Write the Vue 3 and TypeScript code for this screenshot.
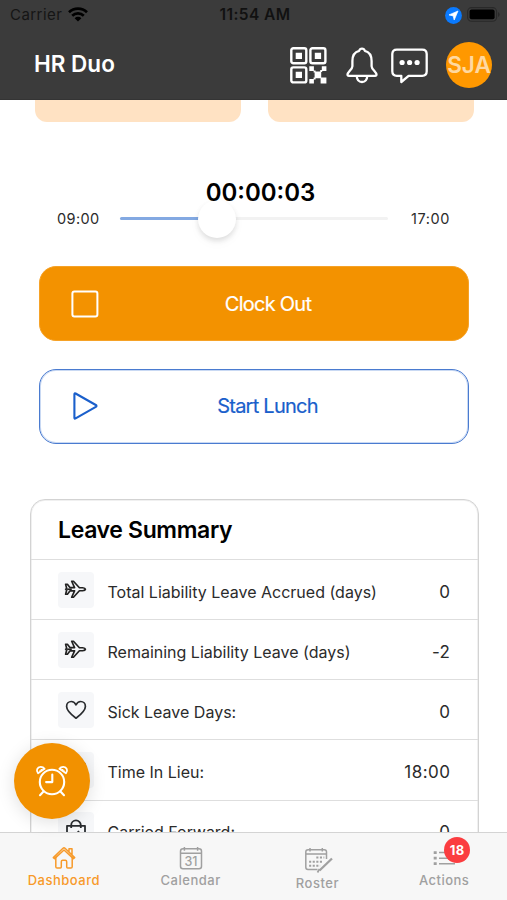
<script setup lang="ts">
type RowIcon = 'plane' | 'heart' | 'bag'
interface LeaveRow { icon: RowIcon; label: string; value: string }
interface Tab { id: string; label: string; active?: boolean; badge?: number }

const rows: LeaveRow[] = [
  { icon: 'plane', label: 'Total Liability Leave Accrued (days)', value: '0' },
  { icon: 'plane', label: 'Remaining Liability Leave (days)', value: '-2' },
  { icon: 'heart', label: 'Sick Leave Days:', value: '0' },
  { icon: 'heart', label: 'Time In Lieu:', value: '18:00' },
  { icon: 'bag', label: 'Carried Forward:', value: '0' },
]
const tabs: Tab[] = [
  { id: 'dashboard', label: 'Dashboard', active: true },
  { id: 'calendar', label: 'Calendar' },
  { id: 'roster', label: 'Roster' },
  { id: 'actions', label: 'Actions', badge: 18 },
]
const progress = 36.3
</script>

<template>
  <div class="screen">
    <header class="header">
      <div class="status">
        <div class="status-left">
          <span class="carrier">Carrier</span>
          <svg class="wifi" width="20" height="15" viewBox="0 0 20 15" fill="none" stroke="#000" stroke-width="2.7">
            <path d="M1 5.2a13 13 0 0 1 18 0M4.2 8.7a8.4 8.4 0 0 1 11.6 0" />
            <path d="M10 14.6 6.6 11.2a4.9 4.9 0 0 1 6.8 0Z" fill="#000" stroke="none" />
          </svg>
        </div>
        <span class="clock">11:54 AM</span>
        <div class="status-right">
          <svg width="17" height="17" viewBox="0 0 17 17"><circle cx="8.5" cy="8.5" r="8.4" fill="#0a7aff" /><path d="M13 4 9.2 13 8.2 8.9 4 7.9Z" fill="#fff" stroke="#fff" stroke-width=".7" stroke-linejoin="round" /></svg>
          <svg class="battery" width="33" height="15" viewBox="0 0 33 15"><rect x=".6" y=".6" width="29" height="13.6" rx="4" fill="none" stroke="#292929" stroke-width="1.1" /><rect x="2.6" y="2.6" width="25" height="9.6" rx="2" /><path d="M31 5v5q1.6-.8 1.6-2.5T31 5Z" fill="#292929" /></svg>
        </div>
      </div>
      <div class="nav">
        <h1 class="brand">HR Duo</h1>
        <svg class="qr" width="37" height="37" viewBox="0 0 37 37">
          <g fill="none" stroke="#fff" stroke-width="2.4">
            <rect x="1.3" y="1.3" width="15" height="15" rx="2" />
            <rect x="20.4" y="1.3" width="15" height="15" rx="2" />
            <rect x="1.3" y="20.4" width="15" height="15" rx="2" />
          </g>
          <path fill="#fff" d="M5.7 5.7h6.3v6.3H5.7zM24.8 5.7h6.3v6.3h-6.3zM5.7 24.8h6.3v6.3H5.7zM19.3 19.3h4.6v4.6h-4.6zM31.8 19.3h4.6v4.6h-4.6zM24.6 24.6h6.6v6.6h-6.6zM19.3 32h4.6v4.6h-4.6zM30.6 30.6h5.8v5.8h-5.8zM23.6 23.6h2v2h-2zM30.2 23h2v2h-2zM23.6 30.6h2v2h-2z" />
        </svg>
        <svg class="bell" width="32" height="37" viewBox="0 0 32 37" fill="none" stroke="#fff" stroke-width="2.3" stroke-linejoin="round">
          <path d="M13.2 3.8Q13.8 1.7 16 1.7t2.8 2.1C23.6 5 25.6 9 25.6 14v5.2c0 3.2 4.9 6.1 4.9 8.3 0 .9-.5 1.3-1.4 1.3H2.9c-.9 0-1.4-.4-1.4-1.3 0-2.2 4.9-5.1 4.9-8.3V14c0-5 2-9 6.8-10.2Z" />
          <path d="M10.7 29c.3 3.9 2.4 6 5.3 6s5-2.1 5.3-6" />
        </svg>
        <svg class="chat" width="37" height="36" viewBox="0 0 37 36" fill="none" stroke="#fff" stroke-width="2.3" stroke-linejoin="round">
          <path d="M5.8 1.6h25.4q4.5 0 4.5 4.5v17.2q0 4.5-4.5 4.5H17.6L10.3 34v-6.2H5.8q-4.5 0-4.5-4.5V6.1q0-4.5 4.5-4.5Z" />
          <g fill="#fff" stroke="none"><circle cx="11.1" cy="14.5" r="2.6" /><circle cx="18.6" cy="14.5" r="2.6" /><circle cx="26.1" cy="14.5" r="2.6" /></g>
        </svg>
        <div class="avatar"><span>SJA</span></div>
      </div>
    </header>

    <main class="content">
      <div class="pads"><div class="pad" /><div class="pad" /></div>
      <div class="timer"><span>00:00:03</span></div>
      <div class="slider-row">
        <span class="start">09:00</span>
        <div class="track">
          <div class="fill" :style="{ width: progress + '%' }"><i class="thumb" /></div>
        </div>
        <span class="end">17:00</span>
      </div>
      <button class="btn primary">
        <svg width="28" height="28" viewBox="0 0 28 28" fill="none" stroke="#fff" stroke-width="2"><rect x="1.4" y="1.4" width="25" height="25" rx="2" /></svg>
        <span>Clock Out</span>
      </button>
      <button class="btn outline">
        <svg width="28" height="28" viewBox="0 0 28 28" fill="none" stroke="#1a5fcb" stroke-width="2.1" stroke-linejoin="round"><path d="M4.4 2.2q0-1.3 1.2-.7L25.8 13q1.4.9 0 1.8L5.6 26.4q-1.2.7-1.2-.7Z" /></svg>
        <span>Start Lunch</span>
      </button>

      <section class="card">
        <h2>Leave Summary</h2>
        <div v-for="row in rows" :key="row.label" class="row">
          <div class="tile">
            <svg v-if="row.icon === 'plane'" width="23" height="20.5" viewBox="0 0 24 22" fill="none" stroke="#222" stroke-width="1.8" stroke-linejoin="round">
              <path d="M1.4 5.6h1.9L6 9.2l5 .1L7.9 2.4h1.9l6.4 7h3.4q2.8.4 3 1.6-.2 1.2-3 1.6h-3.4l-6.4 7H7.9l3.1-6.9-5 .1-2.700 3.600H1.400L2.500 12 1.400 11l1.100-1Z" /><path d="M3 11h5" />
            </svg>
            <svg v-else-if="row.icon === 'heart'" width="22" height="20" viewBox="0 0 22 20" fill="none" stroke="#2a2d30" stroke-width="1.7" stroke-linejoin="round">
              <path d="M11 18.2C6.8 15 1.6 11 1.6 6.4 1.6 3.5 3.7 1.5 6.3 1.5c2.1 0 3.7 1.2 4.7 3.3 1-2.1 2.6-3.3 4.7-3.3 2.6 0 4.7 2 4.7 4.9 0 4.6-5.2 8.6-9.4 11.8Z" />
            </svg>
            <svg v-else width="22" height="22" viewBox="0 0 22 22" fill="none" stroke="#2a2d30" stroke-width="1.8" stroke-linejoin="round">
              <path d="M2 6.8h18V21H2ZM6.2 9V6.2a4.8 4.8 0 0 1 9.6 0V9M8 14.5l2 2 4-4.5" />
            </svg>
          </div>
          <span class="label">{{ row.label }}</span>
          <span class="value">{{ row.value }}</span>
        </div>
      </section>
    </main>

    <nav class="tabs">
      <a v-for="tab in tabs" :key="tab.id" class="tab" :class="[tab.id, { active: tab.active }]">
        <span class="tab-icon">
          <svg v-if="tab.id === 'dashboard'" width="24" height="24" viewBox="0 0 24 24" fill="none" stroke="currentColor" stroke-width="1.5" stroke-linejoin="round" stroke-linecap="round">
            <path d="M3.8 11.5v9.2q0 1.3 1.3 1.3h3.2q1 0 1-1v-5.2q0-1.5 1.4-1.5h2.6q1.4 0 1.4 1.5V21q0 1 1 1h3.2q1.3 0 1.3-1.3v-9.2" />
            <path d="M1.3 11.6 11 2.3q1-.9 2 0l9.7 9.3-1.3 1L12 4 2.6 12.6ZM17 5.6V2.8h3v5.8" />
          </svg>
          <svg v-else-if="tab.id === 'calendar'" width="24" height="24" viewBox="0 0 24 24" fill="none" stroke="currentColor" stroke-width="1.5">
            <rect x="1.5" y="2.8" width="21" height="20" rx="2.5" /><path d="M1.5 7.3h21M5.4 1v3.8M18.6 1v3.8" />
            <text x="12" y="19.5" text-anchor="middle" class="day">31</text>
          </svg>
          <svg v-else-if="tab.id === 'roster'" width="29" height="27" viewBox="0 0 29 27" fill="none" stroke="currentColor" stroke-width="1.5">
            <path d="M22.5 12V5q0-2.2-2.2-2.2H4Q1.8 2.8 1.8 5v15.2q0 2.2 2.2 2.2h9.5M1.8 7h20.7M6 1v3.5M18.3 1v3.5" />
            <path stroke-width="2" stroke-dasharray="2.1 1.5" d="M12.3 10.5h8M5.1 14.7h14M5.1 18.7h11" />
            <path stroke-width="2.3" d="M28 11.5 15.5 23.5" /><path stroke-width="1.7" d="m15.5 22-2 3.5" />
          </svg>
          <svg v-else width="24" height="20" viewBox="0 0 24 20" fill="none" stroke="currentColor" stroke-width="1.5">
            <path d="M7 4.6h16M7 10.2h16M7 15.7h16" /><path stroke-width="2.8" d="M1.7 4.6h3M1.7 10.2h3M1.7 15.7h3" />
          </svg>
          <b v-if="tab.badge" class="badge">{{ tab.badge }}</b>
        </span>
        <span class="tab-label">{{ tab.label }}</span>
      </a>
    </nav>

    <button class="fab" aria-label="Clock">
      <svg width="34" height="32" viewBox="0 0 34 32" fill="none" stroke="#fff" stroke-width="2.1" stroke-linecap="round" stroke-linejoin="round">
        <circle cx="17" cy="17" r="12.2" /><path d="M17.3 9.5v7.6h-6.2M8.5 26.5 5 30.2M25.5 26.5l3.5 3.7" />
        <path stroke-width="1.8" d="M3 8.2C.7 5.500 2.300 2 5.600 1.800c2-.1 3.200.8 4 1.900ZM31 8.200c2.300-2.700.7-6.200-2.600-6.400-2-.1-3.200.8-4 1.900Z" />
        <path stroke-width="1" d="m4.700 5.700 2.300-1.500M29.300 5.700 27 4.200" />
      </svg>
    </button>
  </div>
</template>

<style>
body { background: #fff; }
</style>

<style scoped>
* { box-sizing: border-box; }
.screen { position: relative; width: 507px; height: 900px; display: flex; flex-direction: column; overflow: hidden; background: #fff; font-family: Inter, "Liberation Sans", sans-serif; color: #2b2b2b; }
.header { height: 100px; flex: none; background: #3b3b3b; border-bottom: 1px solid #343434; position: relative; z-index: 1; }
.status { height: 30px; display: grid; grid-template-columns: 1fr auto 1fr; align-items: center; padding: 0 7px 0 10px; color: #111; font-size: 15px; }
.status-left { display: flex; align-items: center; gap: 6px; padding-bottom: 1px; }
.carrier { color: #151515; letter-spacing: .45px; }
.clock { font-size: 15.5px; font-weight: 600; letter-spacing: .45px; padding-bottom: 1px; }
.status-right { display: flex; justify-content: flex-end; align-items: center; gap: 5px; }
.battery { margin-bottom: 2px; }
.nav { height: 70px; display: flex; align-items: center; padding: 0 15px 1px 34px; }
.brand { margin: 0; color: #fff; font-size: 22.5px; font-weight: 600; line-height: 28px; flex: 1; padding-bottom: 2px; }
.qr { margin-right: 19px; margin-top: 2px; }
.bell { margin-right: 13px; margin-top: 2px; }
.chat { margin-right: 18px; margin-top: 2px; }
.avatar { width: 46px; height: 46px; border-radius: 50%; background: #ff9800; color: #ffd9a0; font-size: 22.5px; font-weight: 600; display: flex; justify-content: center; align-items: center; }
.content { flex: 1; min-height: 0; overflow: hidden; }
.pads { display: flex; gap: 27px; padding-left: 34.5px; }
.pad { width: 206px; height: 21.5px; border-radius: 0 0 12px 12px; background: #ffe2c3; }
.timer { position: relative; z-index: 1; height: 32px; margin-top: 55.5px; padding-left: 14px; text-align: center; font-size: 24px; line-height: 32px; font-weight: 600; color: #000; }
.slider-row { height: 20px; display: flex; align-items: center; padding: 0 57px; font-size: 14.5px; line-height: 18px; letter-spacing: .4px; margin-top: -.5px; }
.start { width: 63px; }
.end { width: 62px; text-align: right; letter-spacing: .6px; }
.track { width: 268px; height: 3px; background: #f2f2f2; border-radius: 2px; }
.fill { position: relative; height: 3px; background: #83a9e2; border-radius: 2px; }
.thumb { position: absolute; right: -19px; top: -17px; width: 38px; height: 38px; border-radius: 50%; background: #fff; box-shadow: 0 3px 5px rgba(0,0,0,.11), 0 5px 12px rgba(0,0,0,.03); }
.btn { width: 430px; height: 75px; display: flex; align-items: center; margin: 0 0 0 39px; padding: 0 31px; border-radius: 17px; font-family: inherit; font-size: 20px; letter-spacing: -.75px; -webkit-text-stroke: .2px currentColor; }
.btn span { flex: 1; text-align: center; }
.primary { margin-top: 37.5px; color: #fff; background: #f39200; border: 1px solid #f6a227; }
.outline { margin-top: 27.5px; padding: 0 31px 0 30px; color: #1a5fcb; background: #fff; border: 1px solid #4a7bd0; box-shadow: inset 0 0 0 1px #c9d9f3; }
.card { width: 449px; margin: 55.5px 0 0 29.5px; border: 1px solid #d3d3d3; box-shadow: inset 0 0 0 1px #f0f0f0; border-radius: 15px; background: #fff; }
.card h2 { margin: 0; height: 59px; padding-left: 27.5px; font-size: 23px; line-height: 61px; letter-spacing: -.35px; font-weight: 600; color: #000; }
.row { height: 60.15px; display: flex; align-items: center; border-top: 1px solid #dedede; padding: 0 27px; }
.tile { width: 36px; height: 36px; border-radius: 4px; background: #f6f7f9; display: flex; align-items: center; justify-content: center; margin-right: 14px; }
.label { flex: 1; font-size: 16px; padding-top: 4px; white-space: nowrap; }
.value { font-size: 17px; padding-top: 4px; letter-spacing: .5px; }
.tabs { height: 68px; flex: none; display: grid; grid-template-columns: repeat(4, 1fr); background: #f7f7f7; border-top: 1px solid #d4d4d4; }
.tab { display: flex; flex-direction: column; align-items: center; color: #a0a0a0; padding: 11px 0 0 1px; }
.tab-icon { position: relative; height: 27px; display: flex; align-items: center; }
.tab-label { font-size: 13px; font-weight: 500; line-height: 18px; letter-spacing: .5px; }
.active { color: #f79a2a; }
.roster { padding-top: 14px; }
.roster .tab-icon { padding-left: 3px; }
.day { font: 500 12.5px Inter, sans-serif; fill: currentColor; stroke: none; }
.badge { position: absolute; left: 12px; top: -7px; width: 26px; height: 26px; border-radius: 50%; background: #fb3d40; color: #fff; font-size: 13px; line-height: 26px; text-align: center; letter-spacing: .4px; }
.fab { position: absolute; left: 14px; top: 743px; z-index: 2; width: 76px; height: 76px; padding: 0; border: 0; border-radius: 50%; background: #f29100; display: flex; align-items: center; justify-content: center; box-shadow: 0 3px 18px rgba(0,0,0,.13); }
</style>
